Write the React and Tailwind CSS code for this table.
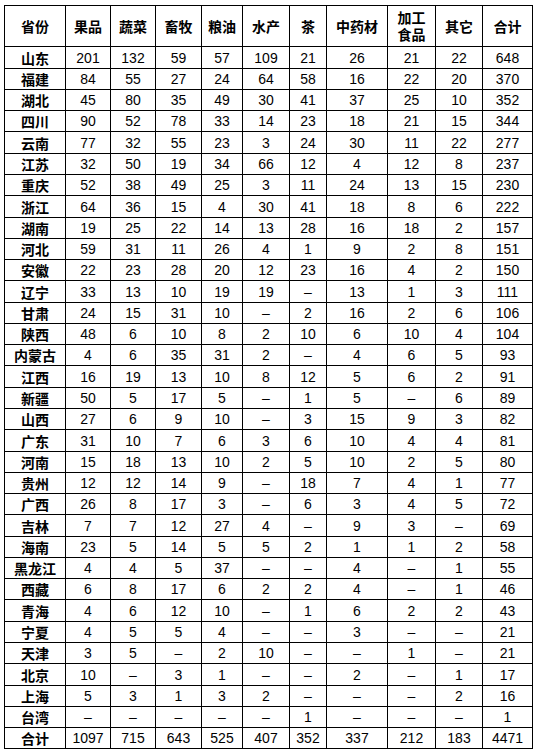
import React from "react";

const headers = ["省份", "果品", "蔬菜", "畜牧", "粮油", "水产", "茶", "中药材", "加工\n食品", "其它", "合计"];
const widthClasses = [
  "w-[61px]",
  "w-[45px]",
  "w-[45px]",
  "w-[46px]",
  "w-[41px]",
  "w-[47px]",
  "w-[37px]",
  "w-[61px]",
  "w-[48px]",
  "w-[47px]",
  "w-[50px]",
];

const raw = `山东 201 132 59 57 109 21 26 21 22 648
福建 84 55 27 24 64 58 16 22 20 370
湖北 45 80 35 49 30 41 37 25 10 352
四川 90 52 78 33 14 23 18 21 15 344
云南 77 32 55 23 3 24 30 11 22 277
江苏 32 50 19 34 66 12 4 12 8 237
重庆 52 38 49 25 3 11 24 13 15 230
浙江 64 36 15 4 30 41 18 8 6 222
湖南 19 25 22 14 13 28 16 18 2 157
河北 59 31 11 26 4 1 9 2 8 151
安徽 22 23 28 20 12 23 16 4 2 150
辽宁 33 13 10 19 19 – 13 1 3 111
甘肃 24 15 31 10 – 2 16 2 6 106
陕西 48 6 10 8 2 10 6 10 4 104
内蒙古 4 6 35 31 2 – 4 6 5 93
江西 16 19 13 10 8 12 5 6 2 91
新疆 50 5 17 5 – 1 5 – 6 89
山西 27 6 9 10 – 3 15 9 3 82
广东 31 10 7 6 3 6 10 4 4 81
河南 15 18 13 10 2 5 10 2 5 80
贵州 12 12 14 9 – 18 7 4 1 77
广西 26 8 17 3 – 6 3 4 5 72
吉林 7 7 12 27 4 – 9 3 – 69
海南 23 5 14 5 5 2 1 1 2 58
黑龙江 4 4 5 37 – – 4 – 1 55
西藏 6 8 17 6 2 2 4 – 1 46
青海 4 6 12 10 – 1 6 2 2 43
宁夏 4 5 5 4 – – 3 – – 21
天津 3 5 – 2 10 – – 1 – 21
北京 10 – 3 1 – – 2 – 1 17
上海 5 3 1 3 2 – – – 2 16
台湾 – – – – – 1 – – – 1
合计 1097 715 643 525 407 352 337 212 183 4471`;

const rows = raw.split("\n").map((l) => l.trim().split(/\s+/));

export default function App() {
  return (
    <div className="w-[539px] h-[756px] bg-white pt-[5px] pl-[4px]">
      <table className="table-fixed border-collapse w-[529px] text-black">
        <colgroup>
          {widthClasses.map((w, i) => (
            <col key={i} className={w} />
          ))}
        </colgroup>
        <thead>
          <tr className="h-[41px]">
            {headers.map((h, i) => (
              <th
                key={i}
                className="border border-black p-0 text-center align-middle text-[14px] leading-[17px] font-bold whitespace-pre-line font-['Noto_Sans_CJK_SC',sans-serif]"
              >
                {h}
              </th>
            ))}
          </tr>
        </thead>
        <tbody>
          {rows.map((r, ri) => {
            const tall = ri % 11 === 0 || ri % 11 === 4 || ri % 11 === 7;
            return (
              <tr key={ri} className={tall ? "h-[22px]" : "h-[21px]"}>
                {r.map((c, ci) =>
                  ci === 0 ? (
                    <td
                      key={ci}
                      className="border border-black p-0 text-center align-middle text-[14px] leading-[16px] font-bold font-['Noto_Sans_CJK_SC',sans-serif]"
                    >
                      {c}
                    </td>
                  ) : (
                    <td
                      key={ci}
                      className="border border-black p-0 text-center align-middle text-[14px] leading-[16px] font-['Liberation_Sans',Arial,sans-serif]"
                    >
                      {c}
                    </td>
                  )
                )}
              </tr>
            );
          })}
        </tbody>
      </table>
    </div>
  );
}
